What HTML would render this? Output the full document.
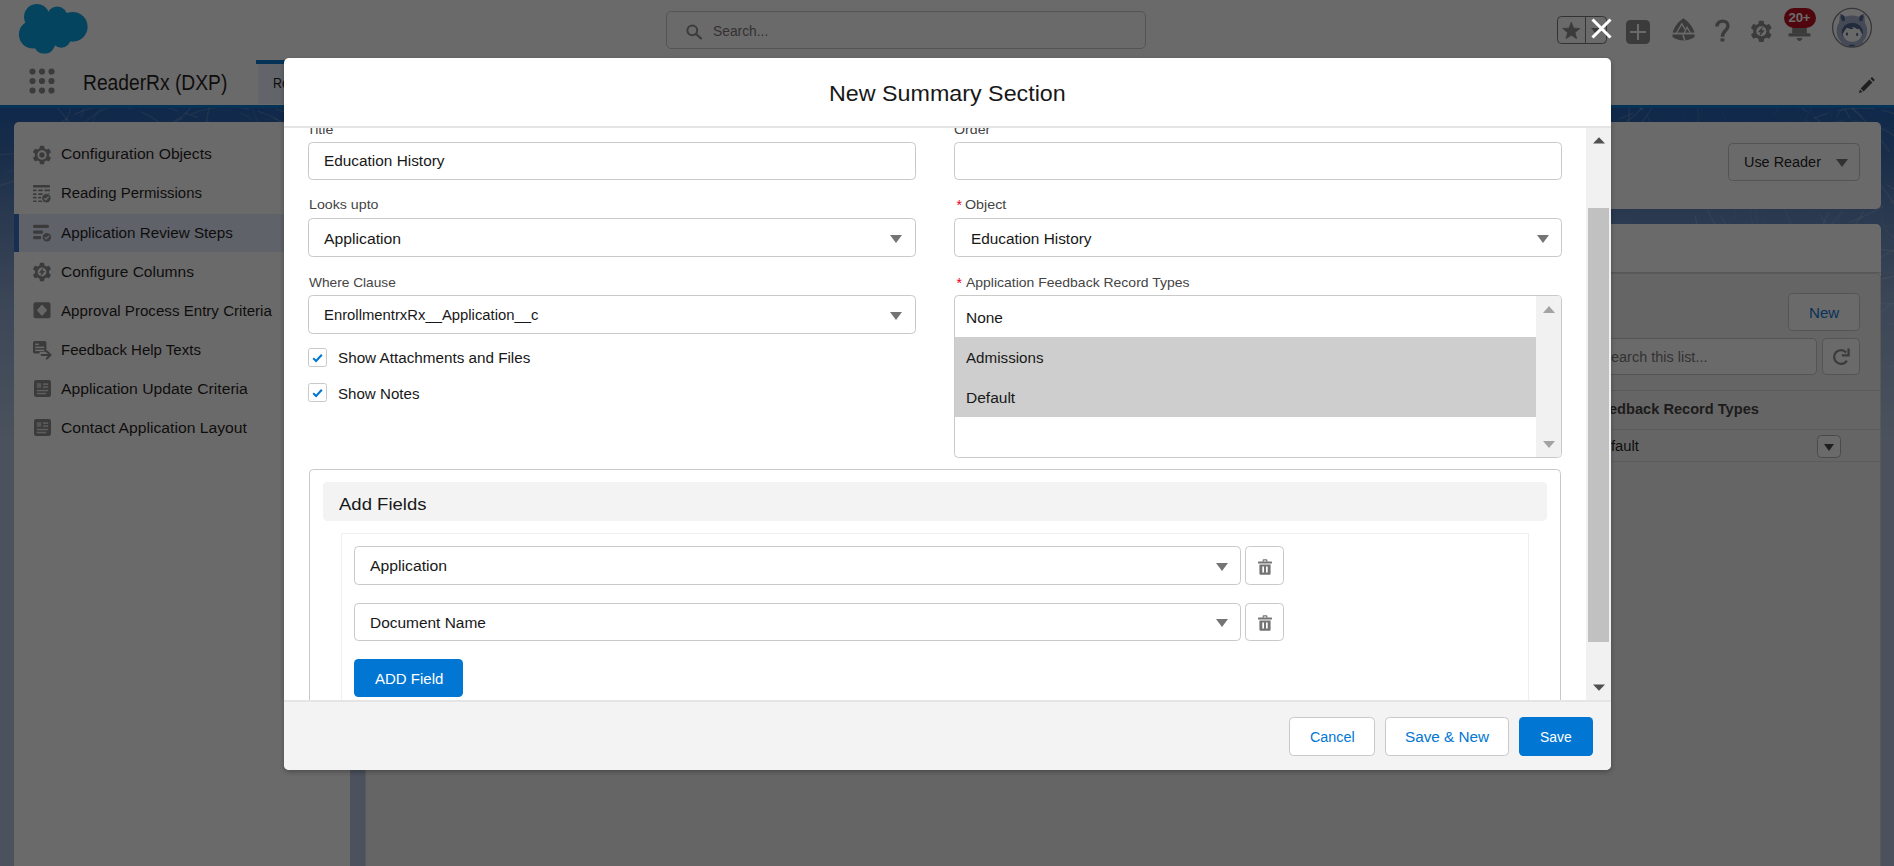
<!DOCTYPE html>
<html><head><meta charset="utf-8"><title>New Summary Section</title>
<style>
*{box-sizing:border-box;margin:0;padding:0}
html,body{width:1894px;height:866px;overflow:hidden;background:#fff}
body{font-family:"Liberation Sans",sans-serif;position:relative}
#app,#backdrop,#overlay{position:absolute;left:0;top:0;width:1894px;height:866px;overflow:hidden}
#backdrop{background:rgba(8,7,7,0.6)}
.t{position:absolute;white-space:pre;line-height:24px;height:24px;transform-origin:0 50%}
.a{position:absolute}
.card{position:absolute;background:#fff;border-radius:5px}
.inp{position:absolute;background:#fff;border:1px solid #c9c9c9;border-radius:4.4px}
.btn{position:absolute;background:#fff;border:1px solid #c9c9c9;border-radius:4.4px}
.arr{position:absolute;width:0;height:0;border-left:6.8px solid transparent;border-right:6.8px solid transparent;border-top:8px solid #747474}
svg{position:absolute;overflow:visible}

</style></head>
<body>
<div id="app">
<!-- page background gradient -->
<div class="a" style="left:0;top:0;width:1894px;height:866px;background:#b0c4df"></div>
<div class="a" style="left:0;top:108px;width:1894px;height:340px;background:linear-gradient(to bottom,#1c5cae 0%,#2f66ae 12%,#5e86bd 32%,#8aa6cf 58%,#b0c4df 100%)"></div>
<svg style="left:0;top:108px" width="1894" height="330" viewBox="0 108 1894 330"><defs><linearGradient id="tf" x1="0" y1="0" x2="0" y2="1"><stop offset="0" stop-color="#fff" stop-opacity="0.17"/><stop offset="0.5" stop-color="#fff" stop-opacity="0.10"/><stop offset="1" stop-color="#fff" stop-opacity="0"/></linearGradient></defs><g fill="none" stroke="url(#tf)" stroke-width="1.2" stroke-dasharray="38 7 14 9"><ellipse cx="598" cy="101" rx="36" ry="95" transform="rotate(17 598 101)"/><ellipse cx="598" cy="101" rx="114" ry="113" transform="rotate(39 598 101)"/><ellipse cx="598" cy="101" rx="68" ry="83" transform="rotate(43 598 101)"/><ellipse cx="598" cy="101" rx="138" ry="63" transform="rotate(102 598 101)"/><ellipse cx="1845" cy="230" rx="144" ry="74" transform="rotate(71 1845 230)"/><ellipse cx="1845" cy="230" rx="161" ry="40" transform="rotate(155 1845 230)"/><ellipse cx="1845" cy="230" rx="93" ry="59" transform="rotate(21 1845 230)"/><ellipse cx="1845" cy="230" rx="109" ry="127" transform="rotate(33 1845 230)"/><ellipse cx="1113" cy="233" rx="42" ry="86" transform="rotate(102 1113 233)"/><ellipse cx="1113" cy="233" rx="118" ry="78" transform="rotate(96 1113 233)"/><ellipse cx="1113" cy="233" rx="151" ry="87" transform="rotate(166 1113 233)"/><ellipse cx="673" cy="127" rx="114" ry="46" transform="rotate(103 673 127)"/><ellipse cx="673" cy="127" rx="107" ry="110" transform="rotate(131 673 127)"/><ellipse cx="526" cy="325" rx="91" ry="39" transform="rotate(62 526 325)"/><ellipse cx="526" cy="325" rx="156" ry="72" transform="rotate(173 526 325)"/><ellipse cx="105" cy="211" rx="71" ry="55" transform="rotate(89 105 211)"/><ellipse cx="105" cy="211" rx="140" ry="42" transform="rotate(17 105 211)"/><ellipse cx="105" cy="211" rx="90" ry="106" transform="rotate(12 105 211)"/><ellipse cx="1412" cy="144" rx="149" ry="95" transform="rotate(51 1412 144)"/><ellipse cx="1412" cy="144" rx="90" ry="93" transform="rotate(4 1412 144)"/><ellipse cx="1412" cy="144" rx="113" ry="61" transform="rotate(21 1412 144)"/><ellipse cx="1412" cy="144" rx="79" ry="123" transform="rotate(23 1412 144)"/><ellipse cx="445" cy="166" rx="40" ry="63" transform="rotate(99 445 166)"/><ellipse cx="445" cy="166" rx="150" ry="106" transform="rotate(156 445 166)"/><ellipse cx="445" cy="166" rx="91" ry="82" transform="rotate(65 445 166)"/><ellipse cx="1718" cy="319" rx="40" ry="38" transform="rotate(119 1718 319)"/><ellipse cx="1718" cy="319" rx="45" ry="107" transform="rotate(33 1718 319)"/><ellipse cx="514" cy="99" rx="74" ry="73" transform="rotate(172 514 99)"/><ellipse cx="514" cy="99" rx="127" ry="80" transform="rotate(111 514 99)"/><ellipse cx="514" cy="99" rx="139" ry="52" transform="rotate(162 514 99)"/><ellipse cx="514" cy="99" rx="166" ry="132" transform="rotate(144 514 99)"/><ellipse cx="735" cy="168" rx="88" ry="59" transform="rotate(34 735 168)"/><ellipse cx="735" cy="168" rx="162" ry="73" transform="rotate(20 735 168)"/><ellipse cx="1151" cy="88" rx="48" ry="34" transform="rotate(65 1151 88)"/><ellipse cx="1151" cy="88" rx="47" ry="110" transform="rotate(111 1151 88)"/><ellipse cx="1151" cy="88" rx="76" ry="68" transform="rotate(63 1151 88)"/><ellipse cx="1151" cy="88" rx="116" ry="68" transform="rotate(153 1151 88)"/><ellipse cx="1936" cy="186" rx="67" ry="37" transform="rotate(135 1936 186)"/><ellipse cx="1936" cy="186" rx="133" ry="77" transform="rotate(125 1936 186)"/><ellipse cx="1936" cy="186" rx="120" ry="64" transform="rotate(171 1936 186)"/><ellipse cx="674" cy="246" rx="121" ry="50" transform="rotate(116 674 246)"/><ellipse cx="674" cy="246" rx="55" ry="108" transform="rotate(93 674 246)"/><ellipse cx="1767" cy="156" rx="94" ry="91" transform="rotate(59 1767 156)"/><ellipse cx="1767" cy="156" rx="71" ry="105" transform="rotate(177 1767 156)"/><ellipse cx="1655" cy="278" rx="119" ry="44" transform="rotate(93 1655 278)"/><ellipse cx="1655" cy="278" rx="87" ry="38" transform="rotate(5 1655 278)"/><ellipse cx="1655" cy="278" rx="92" ry="69" transform="rotate(125 1655 278)"/><ellipse cx="1863" cy="181" rx="149" ry="106" transform="rotate(66 1863 181)"/><ellipse cx="1863" cy="181" rx="70" ry="55" transform="rotate(35 1863 181)"/><ellipse cx="1863" cy="181" rx="83" ry="100" transform="rotate(162 1863 181)"/><ellipse cx="1863" cy="181" rx="173" ry="99" transform="rotate(118 1863 181)"/><ellipse cx="1549" cy="83" rx="44" ry="58" transform="rotate(128 1549 83)"/><ellipse cx="1549" cy="83" rx="68" ry="112" transform="rotate(78 1549 83)"/><ellipse cx="1549" cy="83" rx="134" ry="54" transform="rotate(170 1549 83)"/><ellipse cx="1549" cy="83" rx="159" ry="97" transform="rotate(134 1549 83)"/><ellipse cx="120" cy="103" rx="33" ry="75" transform="rotate(84 120 103)"/><ellipse cx="120" cy="103" rx="123" ry="88" transform="rotate(107 120 103)"/><ellipse cx="899" cy="313" rx="96" ry="36" transform="rotate(3 899 313)"/><ellipse cx="899" cy="313" rx="161" ry="91" transform="rotate(95 899 313)"/><ellipse cx="1817" cy="177" rx="129" ry="43" transform="rotate(45 1817 177)"/><ellipse cx="1817" cy="177" rx="79" ry="56" transform="rotate(106 1817 177)"/><ellipse cx="469" cy="173" rx="37" ry="88" transform="rotate(162 469 173)"/><ellipse cx="469" cy="173" rx="123" ry="105" transform="rotate(93 469 173)"/><ellipse cx="1604" cy="297" rx="94" ry="69" transform="rotate(3 1604 297)"/><ellipse cx="1604" cy="297" rx="97" ry="52" transform="rotate(1 1604 297)"/><ellipse cx="1548" cy="107" rx="104" ry="35" transform="rotate(11 1548 107)"/><ellipse cx="1548" cy="107" rx="126" ry="81" transform="rotate(87 1548 107)"/><ellipse cx="1548" cy="107" rx="151" ry="122" transform="rotate(10 1548 107)"/><ellipse cx="333" cy="71" rx="91" ry="73" transform="rotate(137 333 71)"/><ellipse cx="333" cy="71" rx="153" ry="74" transform="rotate(110 333 71)"/><ellipse cx="961" cy="198" rx="63" ry="68" transform="rotate(145 961 198)"/><ellipse cx="961" cy="198" rx="105" ry="57" transform="rotate(94 961 198)"/><ellipse cx="961" cy="198" rx="163" ry="126" transform="rotate(166 961 198)"/><ellipse cx="961" cy="198" rx="179" ry="75" transform="rotate(81 961 198)"/><ellipse cx="783" cy="166" rx="39" ry="45" transform="rotate(13 783 166)"/><ellipse cx="783" cy="166" rx="124" ry="103" transform="rotate(161 783 166)"/><ellipse cx="783" cy="166" rx="77" ry="108" transform="rotate(119 783 166)"/><ellipse cx="236" cy="298" rx="56" ry="106" transform="rotate(72 236 298)"/><ellipse cx="236" cy="298" rx="102" ry="120" transform="rotate(150 236 298)"/><ellipse cx="236" cy="298" rx="77" ry="84" transform="rotate(93 236 298)"/><ellipse cx="628" cy="113" rx="41" ry="56" transform="rotate(61 628 113)"/><ellipse cx="628" cy="113" rx="99" ry="96" transform="rotate(69 628 113)"/><ellipse cx="628" cy="113" rx="120" ry="72" transform="rotate(173 628 113)"/><ellipse cx="176" cy="308" rx="147" ry="34" transform="rotate(48 176 308)"/><ellipse cx="176" cy="308" rx="49" ry="102" transform="rotate(49 176 308)"/><ellipse cx="209" cy="174" rx="128" ry="47" transform="rotate(27 209 174)"/><ellipse cx="209" cy="174" rx="154" ry="85" transform="rotate(126 209 174)"/><ellipse cx="209" cy="174" rx="69" ry="52" transform="rotate(124 209 174)"/><ellipse cx="209" cy="174" rx="123" ry="64" transform="rotate(169 209 174)"/><ellipse cx="1219" cy="276" rx="103" ry="44" transform="rotate(48 1219 276)"/><ellipse cx="1219" cy="276" rx="59" ry="37" transform="rotate(179 1219 276)"/><ellipse cx="786" cy="307" rx="46" ry="70" transform="rotate(43 786 307)"/><ellipse cx="786" cy="307" rx="57" ry="50" transform="rotate(9 786 307)"/><ellipse cx="786" cy="307" rx="82" ry="74" transform="rotate(55 786 307)"/><ellipse cx="786" cy="307" rx="163" ry="83" transform="rotate(90 786 307)"/><ellipse cx="306" cy="154" rx="149" ry="28" transform="rotate(3 306 154)"/><ellipse cx="306" cy="154" rx="105" ry="119" transform="rotate(93 306 154)"/><ellipse cx="441" cy="181" rx="128" ry="62" transform="rotate(89 441 181)"/><ellipse cx="441" cy="181" rx="144" ry="69" transform="rotate(91 441 181)"/><ellipse cx="441" cy="181" rx="141" ry="131" transform="rotate(62 441 181)"/><ellipse cx="441" cy="181" rx="172" ry="118" transform="rotate(114 441 181)"/><ellipse cx="759" cy="154" rx="130" ry="26" transform="rotate(113 759 154)"/><ellipse cx="759" cy="154" rx="150" ry="73" transform="rotate(10 759 154)"/><ellipse cx="1280" cy="163" rx="110" ry="49" transform="rotate(44 1280 163)"/><ellipse cx="1280" cy="163" rx="79" ry="75" transform="rotate(28 1280 163)"/><ellipse cx="1280" cy="163" rx="111" ry="69" transform="rotate(173 1280 163)"/><ellipse cx="1280" cy="163" rx="189" ry="105" transform="rotate(44 1280 163)"/><ellipse cx="1881" cy="144" rx="52" ry="54" transform="rotate(15 1881 144)"/><ellipse cx="1881" cy="144" rx="77" ry="92" transform="rotate(45 1881 144)"/><ellipse cx="1881" cy="144" rx="151" ry="55" transform="rotate(147 1881 144)"/><ellipse cx="238" cy="218" rx="33" ry="51" transform="rotate(42 238 218)"/><ellipse cx="238" cy="218" rx="114" ry="81" transform="rotate(135 238 218)"/><ellipse cx="238" cy="218" rx="137" ry="108" transform="rotate(158 238 218)"/><ellipse cx="729" cy="148" rx="48" ry="87" transform="rotate(116 729 148)"/><ellipse cx="729" cy="148" rx="49" ry="107" transform="rotate(161 729 148)"/><ellipse cx="729" cy="148" rx="133" ry="109" transform="rotate(146 729 148)"/><ellipse cx="229" cy="201" rx="98" ry="94" transform="rotate(3 229 201)"/><ellipse cx="229" cy="201" rx="126" ry="104" transform="rotate(128 229 201)"/><ellipse cx="229" cy="201" rx="173" ry="102" transform="rotate(15 229 201)"/><ellipse cx="229" cy="201" rx="77" ry="112" transform="rotate(173 229 201)"/><ellipse cx="703" cy="182" rx="105" ry="78" transform="rotate(123 703 182)"/><ellipse cx="703" cy="182" rx="103" ry="36" transform="rotate(144 703 182)"/><ellipse cx="1447" cy="196" rx="41" ry="70" transform="rotate(134 1447 196)"/><ellipse cx="1447" cy="196" rx="101" ry="105" transform="rotate(152 1447 196)"/><ellipse cx="1447" cy="196" rx="86" ry="111" transform="rotate(42 1447 196)"/><ellipse cx="1447" cy="196" rx="150" ry="97" transform="rotate(152 1447 196)"/><ellipse cx="103" cy="306" rx="122" ry="77" transform="rotate(116 103 306)"/><ellipse cx="103" cy="306" rx="53" ry="49" transform="rotate(46 103 306)"/><ellipse cx="103" cy="306" rx="147" ry="73" transform="rotate(102 103 306)"/><ellipse cx="-25" cy="76" rx="147" ry="33" transform="rotate(39 -25 76)"/><ellipse cx="-25" cy="76" rx="103" ry="96" transform="rotate(51 -25 76)"/><ellipse cx="-25" cy="76" rx="114" ry="112" transform="rotate(179 -25 76)"/><ellipse cx="1048" cy="144" rx="142" ry="26" transform="rotate(83 1048 144)"/><ellipse cx="1048" cy="144" rx="142" ry="118" transform="rotate(81 1048 144)"/></g></svg>
<!-- global header -->
<div class="a" style="left:0;top:0;width:1894px;height:60px;background:#fff"></div>
<!-- nav bar -->
<div class="a" style="left:0;top:60px;width:1894px;height:45px;background:#fff"></div>
<div class="a" style="left:0;top:105px;width:1894px;height:3px;background:#0176d3"></div>
<!-- tab -->
<div class="a" style="left:258px;top:64px;width:140px;height:40px;background:#e6f0fc"></div>
<div class="a" style="left:256px;top:60px;width:142px;height:4px;background:#0176d3"></div>
<!-- cloud logo -->
<svg style="left:18px;top:5px" width="70" height="49" viewBox="0 0 70 49"><g fill="#00a1e0">
<circle cx="18.8" cy="11.8" r="12.8"/><circle cx="39.2" cy="11.8" r="10.2"/><circle cx="54.7" cy="21.8" r="14.9"/><circle cx="14.9" cy="29.5" r="14"/><circle cx="26.4" cy="37.6" r="11"/><circle cx="43.3" cy="33.3" r="9.4"/><rect x="14" y="10" width="40" height="26"/></g></svg>
<!-- waffle -->
<svg style="left:29.2px;top:68.1px" width="26" height="26" viewBox="0 0 26 26"><g fill="#8a8a8a">
<circle cx="3.5" cy="3.5" r="3.1"/><circle cx="13" cy="3.5" r="3.1"/><circle cx="22.5" cy="3.5" r="3.1"/>
<circle cx="3.5" cy="13" r="3.1"/><circle cx="13" cy="13" r="3.1"/><circle cx="22.5" cy="13" r="3.1"/>
<circle cx="3.5" cy="22.5" r="3.1"/><circle cx="13" cy="22.5" r="3.1"/><circle cx="22.5" cy="22.5" r="3.1"/></g></svg>
<!-- search -->
<div class="a" style="left:666px;top:11px;width:480px;height:38px;border:1px solid #c9c9c9;border-radius:5px;background:#fff"></div>
<svg style="left:685.6px;top:23.6px" width="16" height="15" viewBox="0 0 16 15"><circle cx="6.3" cy="6.3" r="4.9" fill="none" stroke="#8a8a8a" stroke-width="2"/><path d="M10 10 L15 14.3" stroke="#8a8a8a" stroke-width="2.2" stroke-linecap="round"/></svg>
<!-- left card -->
<div class="card" style="left:14px;top:122px;width:336px;height:760px"></div>
<div class="a" style="left:14px;top:213.5px;width:336px;height:38px;background:#e1ebfd"></div>
<div class="a" style="left:14px;top:213.5px;width:4.5px;height:38px;background:#2f6bc4"></div>
<!-- right cards -->
<div class="card" style="left:365px;top:122px;width:1515.5px;height:87px"></div>
<div class="card" style="left:365px;top:224px;width:1515.5px;height:660px"></div>
<div class="a" style="left:365px;top:271.5px;width:1515.5px;height:1px;background:#d0d0d0"></div>
<div class="a" style="left:365px;top:273px;width:1515.5px;height:620px;background:#f3f3f3;border-radius:4px 4px 0 0;border:1px solid #d4d4d4"></div>
<!-- use reader button -->
<div class="btn" style="left:1728px;top:143px;width:132px;height:37.5px"></div>
<div class="arr" style="left:1835.5px;top:159px;border-top-color:#747474"></div>
<!-- New button -->
<div class="btn" style="left:1788px;top:292.5px;width:71.5px;height:38px"></div>
<!-- search this list -->
<div class="inp" style="left:1500px;top:337.5px;width:316.5px;height:37.5px"></div>
<div class="btn" style="left:1822px;top:337.5px;width:37.5px;height:37.5px"></div>
<!-- table -->
<div class="a" style="left:365px;top:390px;width:1515px;height:1px;background:#d8d8d8"></div>
<div class="a" style="left:365px;top:429px;width:1515px;height:1px;background:#dcdcdc"></div>
<div class="a" style="left:365px;top:461px;width:1515px;height:1px;background:#dcdcdc"></div>
<div class="btn" style="left:1817px;top:434.5px;width:23.5px;height:23.5px;border-color:#b0b0b0"></div>
<div class="arr" style="left:1823.5px;top:443.5px;border-left-width:5.5px;border-right-width:5.5px;border-top-width:7px;border-top-color:#444"></div>
<svg style="left:33px;top:145.5px" width="18" height="18" viewBox="0 0 18 18"><path d="M7.10 2.71 L7.44 0.32 L10.56 0.32 L10.90 2.71 L13.50 4.21 L15.74 3.31 L17.30 6.01 L15.40 7.50 L15.40 10.50 L17.30 11.99 L15.74 14.69 L13.50 13.79 L10.90 15.29 L10.56 17.68 L7.44 17.68 L7.10 15.29 L4.50 13.79 L2.26 14.69 L0.70 11.99 L2.60 10.50 L2.60 7.50 L0.70 6.01 L2.26 3.31 L4.50 4.21 Z" fill="#8a8a8a" stroke="#8a8a8a" stroke-width="1.26" stroke-linejoin="round"/><circle cx="9.0" cy="9.0" r="4.68" fill="#fff"/><circle cx="9.0" cy="9.0" r="2.70" fill="#8a8a8a"/></svg>
<svg style="left:33px;top:184.5px" width="18" height="18" viewBox="0 0 18 18"><g fill="#8a8a8a"><rect x="0" y="0" width="17" height="2.6" rx="0.8"/><rect x="0" y="4.6" width="3.6" height="1.7" rx="0.5"/><rect x="5.2" y="4.6" width="4.6" height="1.7" rx="0.5"/><rect x="11.4" y="4.6" width="5.6" height="1.7" rx="0.5"/><rect x="0" y="8.2" width="3.6" height="1.7" rx="0.5"/><rect x="5.2" y="8.2" width="4.6" height="1.7" rx="0.5"/><rect x="11.4" y="8.2" width="5.6" height="1.7" rx="0.5"/><rect x="0" y="11.8" width="3.6" height="1.7" rx="0.5"/><rect x="5.2" y="11.8" width="4.6" height="1.7" rx="0.5"/><rect x="11.4" y="11.8" width="5.6" height="1.7" rx="0.5"/><rect x="0" y="15.4" width="3.6" height="1.7" rx="0.5"/><rect x="5.2" y="15.4" width="4.6" height="1.7" rx="0.5"/><rect x="11.4" y="15.4" width="5.6" height="1.7" rx="0.5"/></g><circle cx="13.4" cy="13.2" r="5.300000000000001" fill="#fff"/><circle cx="13.4" cy="13.2" r="4.2" fill="#8a8a8a"/><path d="M11.2 13.299999999999999 L12.700000000000001 14.799999999999999 L15.600000000000001 11.7" fill="none" stroke="#fff" stroke-width="1.3"/></svg>
<svg style="left:33px;top:223.5px" width="18" height="18" viewBox="0 0 18 18"><g fill="#8a8a8a"><rect x="0" y="0.8" width="16" height="3.3" rx="1.4"/><rect x="0" y="6.4" width="10" height="3.3" rx="1.4"/><rect x="0" y="12" width="8.2" height="3.3" rx="1.4"/></g><circle cx="13.9" cy="13.2" r="5.300000000000001" fill="#e1ebfd"/><circle cx="13.9" cy="13.2" r="4.2" fill="#8a8a8a"/><path d="M11.7 13.299999999999999 L13.200000000000001 14.799999999999999 L16.1 11.7" fill="none" stroke="#e1ebfd" stroke-width="1.3"/></svg>
<svg style="left:33px;top:262.5px" width="18" height="18" viewBox="0 0 18 18"><path d="M7.10 2.71 L7.44 0.32 L10.56 0.32 L10.90 2.71 L13.50 4.21 L15.74 3.31 L17.30 6.01 L15.40 7.50 L15.40 10.50 L17.30 11.99 L15.74 14.69 L13.50 13.79 L10.90 15.29 L10.56 17.68 L7.44 17.68 L7.10 15.29 L4.50 13.79 L2.26 14.69 L0.70 11.99 L2.60 10.50 L2.60 7.50 L0.70 6.01 L2.26 3.31 L4.50 4.21 Z" fill="#8a8a8a" stroke="#8a8a8a" stroke-width="1.26" stroke-linejoin="round"/><circle cx="9.0" cy="9.0" r="4.41" fill="#fff"/><path d="M10.44 4.50 L5.94 9.81 L8.37 9.81 L7.29 13.68 L12.06 8.01 L9.54 8.01 Z" fill="#8a8a8a"/></svg>
<svg style="left:33px;top:302px" width="18" height="17" viewBox="0 0 18 17"><rect x="0.5" y="0.3" width="17" height="16" rx="2" fill="#8a8a8a"/><path d="M9 2.6 L14.2 8.3 L9 14 L3.8 8.3 Z" fill="#fff" opacity="0.92"/><rect x="0.5" y="7.4" width="17" height="1.6" fill="#fff" opacity="0.0"/></svg>
<svg style="left:32.5px;top:340.5px" width="19" height="18" viewBox="0 0 19 18"><rect x="0" y="0" width="13.4" height="12.6" rx="1.8" fill="#8a8a8a"/><rect x="2.2" y="2.6" width="3.6" height="1.5" fill="#fff"/><rect x="2.2" y="5.6" width="9" height="1.5" fill="#fff"/><rect x="2.2" y="8.6" width="9" height="1.5" fill="#fff"/><rect x="6.6" y="10.8" width="12.4" height="7.2" fill="#fff"/><path d="M8.6 14 H17.4 M13.8 10.4 L17.6 14 L13.8 17.6" fill="none" stroke="#8a8a8a" stroke-width="2" stroke-linecap="round" stroke-linejoin="round"/></svg>
<svg style="left:33.5px;top:380px" width="17" height="17" viewBox="0 0 17 17"><rect x="0" y="0" width="17" height="17" rx="2.2" fill="#8a8a8a"/><rect x="2.8" y="3.2" width="4.4" height="4.6" fill="#fff" opacity="0.55"/><rect x="9" y="3.4" width="5.2" height="1.5" fill="#fff" opacity="0.75"/><rect x="9" y="6.3" width="5.2" height="1.5" fill="#fff" opacity="0.75"/><rect x="2.8" y="9.8" width="11.4" height="1.5" fill="#fff" opacity="0.75"/><rect x="2.8" y="12.8" width="9.4" height="1.5" fill="#fff" opacity="0.75"/></svg>
<svg style="left:33.5px;top:419px" width="17" height="17" viewBox="0 0 17 17"><rect x="0" y="0" width="17" height="17" rx="2.2" fill="#8a8a8a"/><rect x="2.8" y="3.2" width="4.4" height="4.6" fill="#fff" opacity="0.55"/><rect x="9" y="3.4" width="5.2" height="1.5" fill="#fff" opacity="0.75"/><rect x="9" y="6.3" width="5.2" height="1.5" fill="#fff" opacity="0.75"/><rect x="2.8" y="9.8" width="11.4" height="1.5" fill="#fff" opacity="0.75"/><rect x="2.8" y="12.8" width="9.4" height="1.5" fill="#fff" opacity="0.75"/></svg>
<div class="a" style="left:1557px;top:16px;width:50px;height:28px;border:1px solid #747474;border-radius:4.4px"></div>
<div class="a" style="left:1584.6px;top:16px;width:1.7px;height:28px;background:#7c7c7c"></div>
<svg style="left:1561px;top:20px" width="21" height="21" viewBox="0 0 21 21"><path d="M10.30 2.20 L12.59 8.14 L18.95 8.49 L14.01 12.51 L15.65 18.66 L10.30 15.20 L4.95 18.66 L6.59 12.51 L1.65 8.49 L8.01 8.14 Z" fill="#8a8a8a" stroke="#8a8a8a" stroke-width="0.8" stroke-linejoin="round"/></svg>
<div class="arr" style="left:1590.5px;top:27.5px;border-left-width:5.5px;border-right-width:5.5px;border-top-width:6.5px;border-top-color:#8a8a8a"></div>
<svg style="left:1626px;top:20px" width="24" height="24" viewBox="0 0 24 24"><rect width="24" height="24" rx="4.4" fill="#8a8a8a"/><path d="M12 3.9 V20.1 M3.9 12 H20.1" stroke="#fff" stroke-width="2.1"/></svg>
<svg style="left:1672.1px;top:18.4px" width="23" height="23" viewBox="0 0 23 23"><path d="M11.4 0.3 C14.6 2.2 21.6 8.6 22.7 16 L22.6 19 C19.6 21.2 15.4 22.5 11.5 22.5 C7.6 22.5 3.4 21.2 0.5 19 L0.4 16 C1.4 8.6 8.2 2.2 11.4 0.3 Z" fill="#8a8a8a"/><path d="M4.4 15 L9.86 5.9 L12.9 11.1" fill="none" stroke="#fff" stroke-width="1.35"/><path d="M12.1 15 L15.1 9.4 L18.6 15" fill="none" stroke="#fff" stroke-width="1.35"/><path d="M0 15.55 H23" stroke="#fff" stroke-width="1.9"/><path d="M11.3 16.4 C10.2 18.2 13.2 19.4 12.4 22.6" fill="none" stroke="#fff" stroke-width="1.5"/></svg>
<svg style="left:1714.5px;top:18.5px" width="15" height="23" viewBox="0 0 15 23"><path d="M2.0 7.5 C2.0 4 4.4 2.1 7.6 2.1 C11 2.1 13 4.2 13 6.9 C13 11.6 7.4 11.4 7.4 17.8" fill="none" stroke="#8a8a8a" stroke-width="3.4"/><rect x="5.5" y="19.4" width="3.9" height="3.1" fill="#8a8a8a"/></svg>
<svg style="left:1750.7px;top:20.5px" width="20.6" height="20.6" viewBox="0 0 20.6 20.6"><path d="M8.13 3.10 L8.51 0.37 L12.09 0.37 L12.47 3.10 L15.45 4.82 L18.01 3.78 L19.80 6.88 L17.62 8.58 L17.62 12.02 L19.80 13.72 L18.01 16.82 L15.45 15.78 L12.47 17.50 L12.09 20.23 L8.51 20.23 L8.13 17.50 L5.15 15.78 L2.59 16.82 L0.80 13.72 L2.98 12.02 L2.98 8.58 L0.80 6.88 L2.59 3.78 L5.15 4.82 Z" fill="#8a8a8a" stroke="#8a8a8a" stroke-width="1.44" stroke-linejoin="round"/><circle cx="10.3" cy="10.3" r="5.05" fill="#fff"/><path d="M11.95 5.15 L6.80 11.23 L9.58 11.23 L8.34 15.66 L13.80 9.17 L10.92 9.17 Z" fill="#8a8a8a"/></svg>
<svg style="left:1787.5px;top:26px" width="23" height="16" viewBox="0 0 23 16"><g fill="#8a8a8a"><path d="M4.2 7.6 V0 H18.8 V7.6 Z"/><rect x="0.5" y="7.2" width="22" height="3.4" rx="1.2"/><path d="M8.6 12 H14.4 C14.2 13.8 13 14.9 11.5 14.9 C10 14.9 8.8 13.8 8.6 12 Z"/></g></svg>
<div class="a" style="left:1784px;top:8px;width:32px;height:20px;border-radius:10px;background:#ba0517"></div>
<div class="t" style="left:1788.6px;top:5.6px;font-size:13.2px;font-weight:700;color:#fff;letter-spacing:-0.2px">20+</div>
<svg style="left:1832px;top:7.5px" width="40" height="40" viewBox="0 0 40 40"><defs><clipPath id="avc"><circle cx="20" cy="19.7" r="19"/></clipPath></defs><circle cx="20" cy="19.7" r="19.4" fill="#fff" stroke="#808080" stroke-width="1.3"/><g clip-path="url(#avc)"><path d="M7.6 16.5 L8.6 6.4 L16 10.8 Z M32.4 16.5 L31.6 6.4 L24 10.8 Z" fill="#a3b0d0" stroke="#a3b0d0" stroke-width="1.4" stroke-linejoin="round"/><circle cx="19.9" cy="22.9" r="15.3" fill="#a3b0d0"/><ellipse cx="10.9" cy="10.2" rx="1.9" ry="3.3" fill="#4b648e" transform="rotate(-18 10.9 10.2)"/><ellipse cx="29.3" cy="10.2" rx="1.9" ry="3.3" fill="#4b648e" transform="rotate(18 29.3 10.2)"/><ellipse cx="20.3" cy="24.4" rx="10.6" ry="9.6" fill="#4b648e"/><ellipse cx="20.4" cy="26.2" rx="9.6" ry="7.8" fill="#fdfdfd"/><path d="M10.4 25.6 C10.2 18.4 15.4 15 20.6 15.2 C26.2 15.4 30.6 19.4 30.4 25.6 C28.8 23.8 27.9 22.4 27.4 20 C26.6 21.4 25 21.6 24 20.2 C22.6 19.4 21.4 19.2 20 19.4 C21 20 21.4 20.4 21.6 21 C19 21.4 16 20.6 14.4 19.6 C13.4 22 12.2 24 10.4 25.6 Z" fill="#4b648e"/><rect x="14" y="24.6" width="1.9" height="3" rx="0.6" fill="#4b648e"/><rect x="24.2" y="24.9" width="1.9" height="3" rx="0.6" fill="#4b648e"/><path d="M6 40 C8 34 12 33 14 32.6 C17 34.6 23 34.6 26.4 32.6 C29 33 32 34 34 40 Z" fill="#a3b0d0"/><ellipse cx="19.8" cy="38.6" rx="3.6" ry="2.2" fill="#4b648e"/></g></svg>
<svg style="left:1858.5px;top:76.5px" width="16" height="16" viewBox="0 0 16 16"><g fill="#444"><path d="M10.4 2.6 L13.4 5.6 L4.6 14.4 L1.6 11.4 Z"/><path d="M11.4 1.6 L12.4 0.6 Q13 0 13.6 0.6 L15.4 2.4 Q16 3 15.4 3.6 L14.4 4.6 Z"/><path d="M0.9 12.4 L3.6 15.1 L0 16 Z"/></g></svg>
<svg style="left:1832px;top:347.5px" width="18" height="18" viewBox="0 0 18 18"><path d="M14.9 12.6 A6.9 6.9 0 1 1 14.2 4.4" fill="none" stroke="#8a8a8a" stroke-width="2.3"/><path d="M16.6 0.6 V7.4 H9.8" fill="none" stroke="#8a8a8a" stroke-width="2.3" stroke-linejoin="miter"/></svg>
<div class="t" style="left:83.2px;top:71.45px;font-size:21.51px;color:#181818;font-weight:400;transform:scaleX(0.8949)">ReaderRx (DXP)</div>
<div class="t" style="left:712.7px;top:18.70px;font-size:15.29px;color:#747474;font-weight:400;transform:scaleX(0.9035)">Search...</div>
<div class="t" style="left:60.8px;top:142.30px;font-size:15.29px;color:#181818;font-weight:400;transform:scaleX(1.0268)">Configuration Objects</div>
<div class="t" style="left:60.8px;top:181.40px;font-size:15.29px;color:#181818;font-weight:400;transform:scaleX(0.9758)">Reading Permissions</div>
<div class="t" style="left:60.8px;top:220.50px;font-size:15.29px;color:#181818;font-weight:400;transform:scaleX(0.9967)">Application Review Steps</div>
<div class="t" style="left:60.8px;top:259.60px;font-size:15.29px;color:#181818;font-weight:400;transform:scaleX(1.0160)">Configure Columns</div>
<div class="t" style="left:60.8px;top:298.70px;font-size:15.29px;color:#181818;font-weight:400;transform:scaleX(0.9891)">Approval Process Entry Criteria</div>
<div class="t" style="left:60.8px;top:337.80px;font-size:15.29px;color:#181818;font-weight:400;transform:scaleX(0.9822)">Feedback Help Texts</div>
<div class="t" style="left:60.8px;top:376.90px;font-size:15.29px;color:#181818;font-weight:400;transform:scaleX(1.0279)">Application Update Criteria</div>
<div class="t" style="left:60.8px;top:416.00px;font-size:15.29px;color:#181818;font-weight:400;transform:scaleX(1.0271)">Contact Application Layout</div>
<div class="t" style="left:273.1px;top:71.40px;font-size:15.29px;color:#181818;font-weight:400;transform:scaleX(0.8081)">Re</div>
<div class="t" style="left:1743.5px;top:150.20px;font-size:15.29px;color:#181818;font-weight:400;transform:scaleX(0.9436)">Use Reader</div>
<div class="t" style="left:1611.4px;top:344.70px;font-size:15.29px;color:#747474;font-weight:400;transform:scaleX(0.9462)">earch this list...</div>
<div class="t" style="left:1609.2px;top:396.70px;font-size:15.29px;color:#3e3e3c;font-weight:700;transform:scaleX(0.9557)">edback Record Types</div>
<div class="t" style="left:1610.6px;top:434.20px;font-size:15.29px;color:#181818;font-weight:400;transform:scaleX(0.9686)">fault</div>
<div class="t" style="left:1809.4px;top:300.70px;font-size:15.29px;color:#0176d3;font-weight:400;transform:scaleX(0.9871)">New</div>
</div>
<div id="backdrop"></div>
<div id="overlay">
<!-- close X -->
<svg style="left:1591px;top:18px" width="21" height="21" viewBox="0 0 21 21"><path d="M1.5 1.5 L19.5 19.5 M19.5 1.5 L1.5 19.5" stroke="#fff" stroke-width="3.1" stroke-linecap="butt"/></svg>
<!-- modal container -->
<div class="a" style="left:284px;top:58px;width:1327px;height:712px;background:#fff;border-radius:5px;box-shadow:0 2px 5px rgba(0,0,0,0.28)"></div>
<!-- clipped labels under header -->
<div class="a" style="left:300px;top:128px;width:1270px;height:12px;overflow:hidden">
  <div class="t" style="left:7.4px;top:-9.6px;font-size:13.4px;color:#444;transform:scaleX(1.06)">Title</div>
  <div class="t" style="left:653.6px;top:-9.6px;font-size:13.4px;color:#444;transform:scaleX(1.06)">Order</div>
</div>
<div class="a" style="left:284px;top:126px;width:1327px;height:2px;background:#e5e5e5"></div>
<!-- row 1 -->
<div class="inp" style="left:308px;top:142px;width:608px;height:38px"></div>
<div class="inp" style="left:954px;top:142px;width:608px;height:38px"></div>
<!-- row 2 -->
<div class="inp" style="left:308px;top:218px;width:608px;height:39px"></div>
<div class="arr" style="left:890.2px;top:235px"></div>
<div class="inp" style="left:954px;top:218px;width:608px;height:39px"></div>
<div class="arr" style="left:1536.7px;top:235px"></div>
<div class="t" style="left:956.5px;top:193px;font-size:14px;color:#ea001e">*</div>
<!-- row 3 -->
<div class="inp" style="left:308px;top:295px;width:608px;height:39px"></div>
<div class="arr" style="left:890.2px;top:312px"></div>
<div class="t" style="left:956.5px;top:270.5px;font-size:14px;color:#ea001e">*</div>
<!-- listbox -->
<div class="inp" style="left:954px;top:295px;width:608px;height:163px;overflow:hidden">
  <div class="a" style="left:0;top:40.5px;width:581px;height:80px;background:#cecece"></div>
  <div class="a" style="left:581px;top:0;width:25px;height:161px;background:#f1f1f1"></div>
  <div class="a" style="left:587.5px;top:9.5px;width:0;height:0;border-left:6px solid transparent;border-right:6px solid transparent;border-bottom:7px solid #a3a3a3"></div>
  <div class="a" style="left:587.5px;top:144.5px;width:0;height:0;border-left:6px solid transparent;border-right:6px solid transparent;border-top:7px solid #a3a3a3"></div>
</div>
<!-- checkboxes -->
<div class="a" style="left:308px;top:348px;width:18.5px;height:18.5px;border:1px solid #c9c9c9;border-radius:2.5px;background:#fff"></div>
<svg style="left:312px;top:352.5px" width="11" height="10" viewBox="0 0 11 10"><path d="M1.2 5.2 L4.1 8 L9.8 1.8" fill="none" stroke="#0176d3" stroke-width="2"/></svg>
<div class="a" style="left:308px;top:383px;width:18.5px;height:18.5px;border:1px solid #c9c9c9;border-radius:2.5px;background:#fff"></div>
<svg style="left:312px;top:387.5px" width="11" height="10" viewBox="0 0 11 10"><path d="M1.2 5.2 L4.1 8 L9.8 1.8" fill="none" stroke="#0176d3" stroke-width="2"/></svg>
<!-- Add fields box -->
<div class="a" style="left:309px;top:469px;width:1252px;height:240px;border:1px solid #c9c9c9;border-radius:4.4px;background:#fff"></div>
<div class="a" style="left:322.5px;top:482px;width:1224.5px;height:38.5px;background:#f3f3f3;border-radius:4.4px"></div>
<div class="a" style="left:341px;top:533px;width:1188px;height:180px;border:1px solid #efefef;background:#fff"></div>
<div class="inp" style="left:353.5px;top:546px;width:887.5px;height:38.5px"></div>
<div class="arr" style="left:1215.7px;top:562.5px"></div>
<div class="btn" style="left:1245px;top:546px;width:39px;height:38.5px"></div>
<div class="inp" style="left:353.5px;top:603px;width:887.5px;height:38px"></div>
<div class="arr" style="left:1215.7px;top:619px"></div>
<div class="btn" style="left:1245px;top:603px;width:39px;height:38px"></div>
<svg class="trash" style="left:1257.5px;top:558.5px" width="14" height="16" viewBox="0 0 14 16"><g fill="#747474"><rect x="0" y="2.6" width="14" height="1.9" rx="0.6"/><path d="M4.6 2.8 V1.2 Q4.6 0.2 5.6 0.2 H8.4 Q9.4 0.2 9.4 1.2 V2.8 H8.2 V1.4 H5.8 V2.8 Z"/><path d="M1.4 5.6 H12.6 V14.6 Q12.6 15.8 11.4 15.8 H2.6 Q1.4 15.8 1.4 14.6 Z M4.3 7.4 V13.6 H6 V7.4 Z M8 7.4 V13.6 H9.7 V7.4 Z" fill-rule="evenodd"/></g></svg>
<svg class="trash" style="left:1257.5px;top:615px" width="14" height="16" viewBox="0 0 14 16"><g fill="#747474"><rect x="0" y="2.6" width="14" height="1.9" rx="0.6"/><path d="M4.6 2.8 V1.2 Q4.6 0.2 5.6 0.2 H8.4 Q9.4 0.2 9.4 1.2 V2.8 H8.2 V1.4 H5.8 V2.8 Z"/><path d="M1.4 5.6 H12.6 V14.6 Q12.6 15.8 11.4 15.8 H2.6 Q1.4 15.8 1.4 14.6 Z M4.3 7.4 V13.6 H6 V7.4 Z M8 7.4 V13.6 H9.7 V7.4 Z" fill-rule="evenodd"/></g></svg>
<div class="a" style="left:354px;top:659px;width:109px;height:38px;background:#0176d3;border-radius:4.4px"></div>
<!-- modal scrollbar -->
<div class="a" style="left:1586px;top:128px;width:25px;height:572px;background:#f1f1f1"></div>
<div class="a" style="left:1588px;top:208px;width:21px;height:434px;background:#c1c1c1"></div>
<svg style="left:1592.7px;top:137.3px" width="12" height="7" viewBox="0 0 12 7"><path d="M0 6.6 L6 0.2 L12 6.6 Z" fill="#505050"/></svg>
<svg style="left:1592.7px;top:683.6px" width="12" height="7" viewBox="0 0 12 7"><path d="M0 0.4 L12 0.4 L6 6.8 Z" fill="#505050"/></svg>
<!-- footer -->
<div class="a" style="left:284px;top:700px;width:1327px;height:70px;background:#f3f3f3;border-top:2px solid #e5e5e5;border-radius:0 0 5px 5px"></div>
<div class="btn" style="left:1289px;top:717px;width:86px;height:39px"></div>
<div class="btn" style="left:1385px;top:717px;width:124px;height:39px"></div>
<div class="a" style="left:1519px;top:717px;width:73.5px;height:39px;background:#0176d3;border-radius:4.4px"></div>

<div class="t" style="left:829.3px;top:82.20px;font-size:21.93px;color:#181818;font-weight:400;transform:scaleX(1.0619)">New Summary Section</div>
<div class="t" style="left:324.4px;top:149.30px;font-size:15.29px;color:#181818;font-weight:400;transform:scaleX(1.0062)">Education History</div>
<div class="t" style="left:308.8px;top:193.15px;font-size:13.41px;color:#444444;font-weight:400;transform:scaleX(1.0595)">Looks upto</div>
<div class="t" style="left:324.4px;top:226.60px;font-size:15.29px;color:#181818;font-weight:400;transform:scaleX(1.0318)">Application</div>
<div class="t" style="left:308.5px;top:270.85px;font-size:13.41px;color:#444444;font-weight:400;transform:scaleX(1.0218)">Where Clause</div>
<div class="t" style="left:324.4px;top:302.50px;font-size:15.29px;color:#181818;font-weight:400;transform:scaleX(0.9710)">EnrollmentrxRx__Application__c</div>
<div class="t" style="left:337.5px;top:346.40px;font-size:15.29px;color:#181818;font-weight:400;transform:scaleX(0.9976)">Show Attachments and Files</div>
<div class="t" style="left:337.5px;top:381.50px;font-size:15.29px;color:#181818;font-weight:400;transform:scaleX(0.9884)">Show Notes</div>
<div class="t" style="left:965.1px;top:193.15px;font-size:13.41px;color:#444444;font-weight:400;transform:scaleX(1.0658)">Object</div>
<div class="t" style="left:970.5px;top:226.60px;font-size:15.29px;color:#181818;font-weight:400;transform:scaleX(1.0062)">Education History</div>
<div class="t" style="left:965.5px;top:270.65px;font-size:13.41px;color:#444444;font-weight:400;transform:scaleX(1.0424)">Application Feedback Record Types</div>
<div class="t" style="left:965.5px;top:305.90px;font-size:15.29px;color:#181818;font-weight:400;transform:scaleX(1.0120)">None</div>
<div class="t" style="left:965.5px;top:345.90px;font-size:15.29px;color:#181818;font-weight:400;transform:scaleX(0.9924)">Admissions</div>
<div class="t" style="left:965.5px;top:385.90px;font-size:15.29px;color:#181818;font-weight:400;transform:scaleX(1.0153)">Default</div>
<div class="t" style="left:338.8px;top:491.85px;font-size:17.18px;color:#181818;font-weight:400;transform:scaleX(1.0781)">Add Fields</div>
<div class="t" style="left:370.0px;top:553.90px;font-size:15.29px;color:#181818;font-weight:400;transform:scaleX(1.0318)">Application</div>
<div class="t" style="left:370.0px;top:611.10px;font-size:15.29px;color:#181818;font-weight:400;transform:scaleX(1.0109)">Document Name</div>
<div class="t" style="left:374.9px;top:666.50px;font-size:15.29px;color:#ffffff;font-weight:400;transform:scaleX(0.9815)">ADD Field</div>
<div class="t" style="left:1309.5px;top:724.90px;font-size:15.29px;color:#0176d3;font-weight:400;transform:scaleX(0.9390)">Cancel</div>
<div class="t" style="left:1405.4px;top:724.90px;font-size:15.29px;color:#0176d3;font-weight:400;transform:scaleX(1.0006)">Save &amp; New</div>
<div class="t" style="left:1539.6px;top:724.90px;font-size:15.29px;color:#ffffff;font-weight:400;transform:scaleX(0.9094)">Save</div>
</div>
</body></html>
